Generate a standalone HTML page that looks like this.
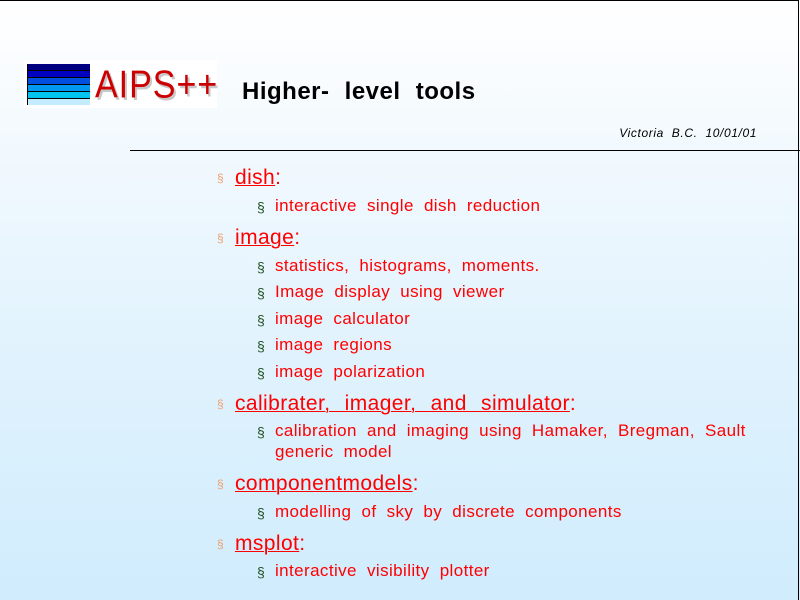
<!DOCTYPE html>
<html><head><meta charset="utf-8"><style>
html,body{margin:0;padding:0}
body{width:800px;height:600px;position:relative;overflow:hidden;font-family:"Liberation Sans",Arial,sans-serif;
background:linear-gradient(to bottom,#ffffff 0%,#f2f9fe 25%,#e0f2fd 60%,#d0ecfd 100%);}
.frame{position:absolute;left:0;top:0;width:799px;height:600px;border-top:1px solid #000;border-right:1px solid #000;box-sizing:border-box}
.logo{position:absolute;left:24px;top:60px;width:193px;height:48px;background:#fff}
.stripes{position:absolute;left:27px;top:64px;width:62px;height:41px;border-left:1px solid #000}
.stripes div{height:6px;border-bottom:1px solid #000}
.aips{position:absolute;left:95px;top:62px;font-size:34px;color:#cc0000;letter-spacing:1px;text-shadow:2px 2px 0 #c8c8c8;line-height:40px;transform:scaleY(1.15);transform-origin:top left}
.title{position:absolute;left:242px;top:78px;font-size:24px;font-weight:bold;letter-spacing:0.5px;word-spacing:8px;color:#000}
.date{position:absolute;right:43px;top:126px;font-size:12px;font-style:italic;letter-spacing:0.6px;word-spacing:4px}
.rule{position:absolute;left:130px;top:150px;width:670px;height:1px;background:#000}
.l{position:absolute;white-space:nowrap;color:#ff0000}
.l1{font-size:21px;left:235px;letter-spacing:0.4px;word-spacing:8px}
.l1 u{text-decoration:underline;text-decoration-thickness:1px}
.l1:before{content:"§";position:absolute;left:-18px;top:5px;font-size:12px;color:#f0a070}
.l2{font-size:17px;left:275px;letter-spacing:0.4px;word-spacing:5px}
.l2:before{content:"§";position:absolute;left:-18px;top:3px;font-size:14px;color:#205020}
.nb:before{content:none}
</style></head><body>
<div class="frame"></div>
<div class="logo"></div>
<div class="stripes">
<div style="background:#000080"></div><div style="background:#0000c0"></div><div style="background:#0050e0"></div><div style="background:#0098f0"></div><div style="background:#00c4f0"></div><div style="background:#c4ecff;border-bottom:none;height:6px"></div>
</div>
<div class="aips">AIPS++</div>
<div class="title">Higher- level tools</div>
<div class="date">Victoria B.C. 10/01/01</div>
<div class="rule"></div>

<div class="l l1" style="top:166px"><u>dish</u>:</div>
<div class="l l2" style="top:196px">interactive single dish reduction</div>
<div class="l l1" style="top:226px"><u>image</u>:</div>
<div class="l l2" style="top:256px">statistics, histograms, moments.</div>
<div class="l l2" style="top:282px">Image display using viewer</div>
<div class="l l2" style="top:309px">image calculator</div>
<div class="l l2" style="top:335px">image regions</div>
<div class="l l2" style="top:362px">image polarization</div>
<div class="l l1" style="top:392px"><u>calibrater, imager, and simulator</u>:</div>
<div class="l l2" style="top:421px">calibration and imaging using Hamaker, Bregman, Sault</div>
<div class="l l2 nb" style="top:442px">generic model</div>
<div class="l l1" style="top:472px"><u>componentmodels</u>:</div>
<div class="l l2" style="top:502px">modelling of sky by discrete components</div>
<div class="l l1" style="top:532px"><u>msplot</u>:</div>
<div class="l l2" style="top:561px">interactive visibility plotter</div>
</body></html>
